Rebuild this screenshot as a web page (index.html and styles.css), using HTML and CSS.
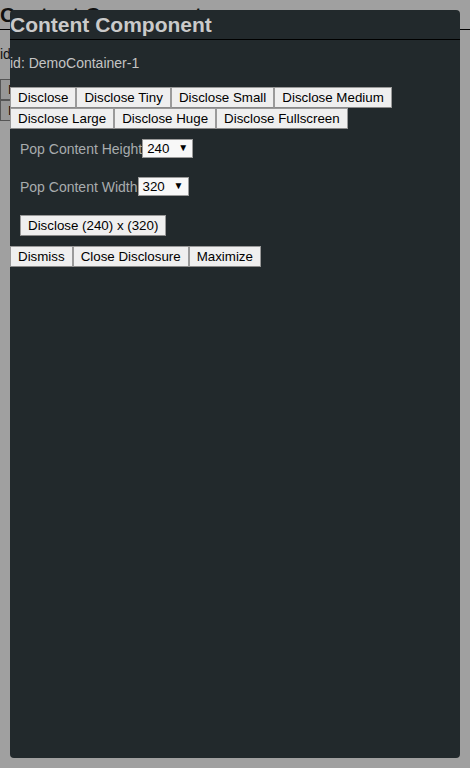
FILE: index.html
```html
<!DOCTYPE html>
<html>
<head>
<meta charset="utf-8">
<link rel="stylesheet" href="styles.css">
</head>
<body>
<div class="page">
  <h2 class="title">Content Component</h2>
  <div class="ident">id: DemoContainer-1</div>
  <div class="btns">
    <button class="btn">Disclose</button><button class="btn">Disclose Tiny</button><button class="btn">Disclose Small</button><button class="btn">Disclose Medium</button><button class="btn">Disclose Large</button><button class="btn">Disclose Huge</button><button class="btn">Disclose Fullscreen</button>
  </div>
</div>

<div class="modal">
  <h2 class="title">Content Component</h2>
  <div class="ident">id: DemoContainer-1</div>
  <div class="btns">
    <button class="btn">Disclose</button><button class="btn">Disclose Tiny</button><button class="btn">Disclose Small</button><button class="btn">Disclose Medium</button><button class="btn">Disclose Large</button><button class="btn">Disclose Huge</button><button class="btn">Disclose Fullscreen</button>
  </div>
  <div class="pop">
    <div class="row"><span class="lbl">Pop Content Height</span><span class="sel">240<span class="arr">▼</span></span></div>
    <div class="row"><span class="lbl">Pop Content Width</span><span class="sel">320<span class="arr">▼</span></span></div>
    <div class="row"><button class="btn">Disclose (240) x (320)</button></div>
  </div>
  <div class="btns">
    <button class="btn">Dismiss</button><button class="btn">Close Disclosure</button><button class="btn">Maximize</button>
  </div>
</div>
</body>
</html>
```

FILE: styles.css
```css
html, body {
  margin: 0;
  padding: 0;
}
body {
  background: #a0a0a0;
  font-family: "Liberation Sans", Arial, sans-serif;
  width: 470px;
  height: 768px;
  overflow: hidden;
  position: relative;
}
.title {
  margin: 0;
  font-size: 21px;
  font-weight: bold;
  line-height: 29px;
  height: 29px;
  border-bottom: 1px solid #000;
  white-space: nowrap;
}
.ident {
  font-size: 14px;
  line-height: 16px;
  margin-top: 15px;
  margin-bottom: 16px;
}
.btns {
  display: flex;
  flex-wrap: wrap;
}
.btn {
  appearance: none;
  -webkit-appearance: none;
  margin: 0;
  font-family: "Liberation Sans", Arial, sans-serif;
  font-size: 13.333px;
  line-height: 15px;
  height: 21px;
  padding: 2px 7px;
  border: 1px solid #9a9a9a;
  border-bottom-color: #8a8a8a;
  background: #efefef;
  color: #000;
  white-space: nowrap;
  border-radius: 0;
}
.page {
  color: #111;
}
.page .btn {
  background: #979797;
  border-color: #555;
  color: #111;
}
.page .ident {
  margin-top: 16px;
  margin-bottom: 17px;
}
.modal {
  position: absolute;
  left: 10px;
  top: 10px;
  width: 450px;
  height: 748px;
  background: #22292c;
  border-radius: 4px;
  color: #c4c4c4;
}
.modal .title {
  color: #cacaca;
  border-radius: 4px 4px 0 0;
}
.pop {
  display: flex;
  flex-direction: column;
  gap: 19px;
  padding: 10px 10px 10px;
}
.row {
  display: flex;
  align-items: center;
  height: 19px;
}
.pop .row:last-child {
  height: 21px;
}
.lbl {
  font-size: 14px;
  color: #a8acae;
}
.sel {
  box-sizing: border-box;
  width: 51px;
  height: 19px;
  background: #f8f8f8;
  border: 1px solid #9a9a9a;
  color: #000;
  font-size: 13.333px;
  line-height: 17px;
  padding-left: 4px;
  display: flex;
  justify-content: space-between;
}
.arr {
  font-size: 10px;
  padding-right: 4px;
  line-height: 15px;
}
```
